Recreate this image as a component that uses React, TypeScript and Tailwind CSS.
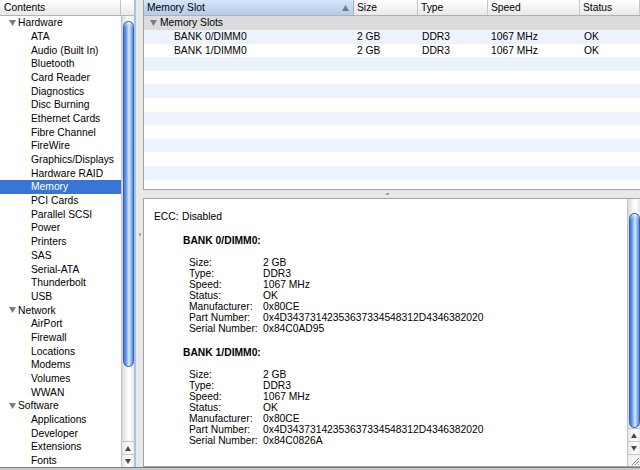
import React from "react";

const hardware = [
  "ATA",
  "Audio (Built In)",
  "Bluetooth",
  "Card Reader",
  "Diagnostics",
  "Disc Burning",
  "Ethernet Cards",
  "Fibre Channel",
  "FireWire",
  "Graphics/Displays",
  "Hardware RAID",
  "Memory",
  "PCI Cards",
  "Parallel SCSI",
  "Power",
  "Printers",
  "SAS",
  "Serial-ATA",
  "Thunderbolt",
  "USB",
];
const network = ["AirPort", "Firewall", "Locations", "Modems", "Volumes", "WWAN"];
const software = ["Applications", "Developer", "Extensions", "Fonts"];

function Disclosure() {
  return (
    <svg width="7" height="6" viewBox="0 0 7 6">
      <path d="M0 0H7L3.5 6Z" fill="#7d7d7d" />
    </svg>
  );
}

function Group({ label }: { label: string }) {
  return (
    <div className="h-[13.7px] flex items-center whitespace-nowrap">
      <span className="ml-[9px] mr-[2px] flex">
        <Disclosure />
      </span>
      <span>{label}</span>
    </div>
  );
}

function Item({ label, selected }: { label: string; selected?: boolean }) {
  return (
    <div
      className={
        selected
          ? "h-[13.7px] flex items-center pl-[31px] whitespace-nowrap bg-[#3875d7] text-white"
          : "h-[13.7px] flex items-center pl-[31px] whitespace-nowrap"
      }
    >
      {label}
    </div>
  );
}

function Arrow({ up }: { up?: boolean }) {
  return (
    <div className="h-[13px] shrink-0 flex items-center justify-center border-t border-[#c6c6c6] bg-[linear-gradient(to_right,#e6e6e6,#fafafa_45%,#ffffff_60%,#ececec)]">
      <svg width="6" height="5" viewBox="0 0 6 5">
        {up ? <path d="M3 0L6 5H0Z" fill="#4a4a4a" /> : <path d="M0 0H6L3 5Z" fill="#4a4a4a" />}
      </svg>
    </div>
  );
}

function Thumb({ h, mt }: { h: string; mt: string }) {
  return (
    <div
      className={`${mt} ${h} w-[11px] rounded-full border border-[#2f5cb4] bg-[linear-gradient(to_right,#2d5fc6,#5f92e6_20%,#a8cbf7_42%,#d6e8fd_55%,#94bbf1_78%,#3a6dd1)] shadow-[inset_0_2px_2px_rgba(255,255,255,0.6)]`}
    />
  );
}

function Grip() {
  return (
    <div className="h-[12px] shrink-0 border-t border-[#c6c6c6] bg-[#f2f2f2] flex items-end justify-end">
      <svg width="11" height="11" viewBox="0 0 11 11">
        <path d="M10 3L3 10M10 6L6 10M10 9L9 10" stroke="#8a8a8a" strokeWidth="1" />
      </svg>
    </div>
  );
}

const trackBg =
  "bg-[linear-gradient(to_right,#d9d9d9,#f3f3f3_35%,#ffffff_60%,#e9e9e9)]";

const cols = [
  { label: "Memory Slot", w: "w-[210px]" },
  { label: "Size", w: "w-[64px]" },
  { label: "Type", w: "w-[70px]" },
  { label: "Speed", w: "w-[92px]" },
  { label: "Status", w: "flex-1" },
];

const slots = [
  ["BANK 0/DIMM0", "2 GB", "DDR3", "1067 MHz", "OK"],
  ["BANK 1/DIMM0", "2 GB", "DDR3", "1067 MHz", "OK"],
];

function DetailRows({ serial }: { serial: string }) {
  const rows: [string, string][] = [
    ["Size:", "2 GB"],
    ["Type:", "DDR3"],
    ["Speed:", "1067 MHz"],
    ["Status:", "OK"],
    ["Manufacturer:", "0x80CE"],
    ["Part Number:", "0x4D34373142353637334548312D4346382020"],
    ["Serial Number:", serial],
  ];
  return (
    <div className="flex flex-col mt-[10.5px]">
      {rows.map(([k, v]) => (
        <div key={k} className="h-[11.1px] flex items-center pl-[45px] whitespace-nowrap">
          <span className="w-[74px] shrink-0">{k}</span>
          <span>{v}</span>
        </div>
      ))}
    </div>
  );
}

export default function App() {
  return (
    <div className="w-[640px] h-[470px] flex flex-col bg-[#e8e8e8] text-black text-[10.3px] font-['Liberation_Sans',Arial,sans-serif] overflow-hidden select-none">
      <div className="h-[467px] flex">
        {/* Sidebar */}
        <div className="w-[136px] shrink-0 flex flex-col bg-white border-r-2 border-[#a9c2e8] overflow-hidden">
          <div className="h-[16px] shrink-0 flex bg-[linear-gradient(#ffffff,#e9e9e9)] border-b border-[#b4b4b4]">
            <div className="flex-1 flex items-center pl-[4px] border-r border-[#c4c4c4]">Contents</div>
            <div className="w-[13px]" />
          </div>
          <div className="flex-1 flex min-h-0">
            <div className="flex-1 flex flex-col overflow-hidden">
              <Group label="Hardware" />
              {hardware.map((h) => (
                <Item key={h} label={h} selected={h === "Memory"} />
              ))}
              <Group label="Network" />
              {network.map((h) => (
                <Item key={h} label={h} />
              ))}
              <Group label="Software" />
              {software.map((h) => (
                <Item key={h} label={h} />
              ))}
            </div>
            <div className={`w-[13px] shrink-0 flex flex-col border-l border-[#c4c4c4] ${trackBg}`}>
              <div className="flex-1 flex flex-col items-center">
                <Thumb mt="mt-[5px]" h="h-[346px]" />
              </div>
              <Arrow up />
              <Arrow />
            </div>
          </div>
        </div>

        {/* vertical splitter */}
        <div className="w-[7px] shrink-0 flex flex-col items-center pt-[233px]">
          <div className="w-[2px] h-[3px] bg-[#9a9a9a] rounded-full" />
        </div>

        {/* Right side */}
        <div className="flex-1 flex flex-col min-w-0">
          {/* top table */}
          <div className="h-[190px] shrink-0 flex flex-col bg-white border-l border-b border-[#a2a2a2] overflow-hidden">
            <div className="h-[16px] shrink-0 flex border-b border-[#b0b0b0] bg-[linear-gradient(#ffffff,#e9e9e9)]">
              {cols.map((c, i) => (
                <div
                  key={c.label}
                  className={
                    i === 0
                      ? `${c.w} shrink-0 flex items-center justify-between px-[3px] border-r border-[#9fb3d2] bg-[linear-gradient(#d6e4f6,#b3cbeb)]`
                      : `${c.w} shrink-0 flex items-center px-[3px] border-r border-[#c8c8c8]`
                  }
                >
                  <span>{c.label}</span>
                  {i === 0 && (
                    <svg width="7" height="6" viewBox="0 0 7 6" className="mr-[1px]">
                      <path d="M3.5 0L7 6H0Z" fill="#6f7a8a" />
                    </svg>
                  )}
                </div>
              ))}
            </div>
            <div className="h-[14px] shrink-0 flex items-center bg-[#dcdcdc] whitespace-nowrap">
              <span className="ml-[6px] mr-[3px] flex">
                <Disclosure />
              </span>
              <span>Memory Slots</span>
            </div>
            {Array.from({ length: 12 }).map((_, r) => {
              const d = slots[r];
              return (
                <div
                  key={r}
                  className={
                    r % 2 === 0
                      ? "h-[13.6px] shrink-0 flex items-center bg-[#edf3fe] whitespace-nowrap"
                      : "h-[13.6px] shrink-0 flex items-center bg-white whitespace-nowrap"
                  }
                >
                  {d && (
                    <>
                      <div className="w-[210px] shrink-0 pl-[30px]">{d[0]}</div>
                      <div className="w-[64px] shrink-0 pl-[3px]">{d[1]}</div>
                      <div className="w-[70px] shrink-0 pl-[4px]">{d[2]}</div>
                      <div className="w-[92px] shrink-0 pl-[3px]">{d[3]}</div>
                      <div className="flex-1 pl-[4px]">{d[4]}</div>
                    </>
                  )}
                </div>
              );
            })}
          </div>

          {/* horizontal splitter */}
          <div className="h-[8px] shrink-0 flex items-center justify-center">
            <div className="w-[3px] h-[2px] bg-[#9a9a9a] rounded-full ml-[-8px]" />
          </div>

          {/* detail panel */}
          <div className="flex-1 flex min-h-0 bg-white border border-r-0 border-[#a2a2a2]">
            <div className="flex-1 flex flex-col overflow-hidden">
              <div className="mt-[12px] h-[11.2px] flex items-center pl-[10px] whitespace-nowrap">
                <span className="w-[28px]">ECC:</span>
                <span>Disabled</span>
              </div>
              <div className="mt-[13px] h-[11.2px] flex items-center pl-[39px] font-bold">BANK 0/DIMM0:</div>
              <DetailRows serial="0x84C0AD95" />
              <div className="mt-[12.5px] h-[11.2px] flex items-center pl-[39px] font-bold">BANK 1/DIMM0:</div>
              <DetailRows serial="0x84C0826A" />
            </div>
            <div className={`w-[13px] shrink-0 flex flex-col border-l border-[#c4c4c4] ${trackBg}`}>
              <div className="flex-1 flex flex-col items-center">
                <Thumb mt="mt-[14px]" h="h-[215px]" />
              </div>
              <Arrow up />
              <Arrow />
              <Grip />
            </div>
          </div>
        </div>
      </div>
      <div className="h-[3px] shrink-0 border-t border-[#7a7a7a] bg-[#c8c8c8]" />
    </div>
  );
}
